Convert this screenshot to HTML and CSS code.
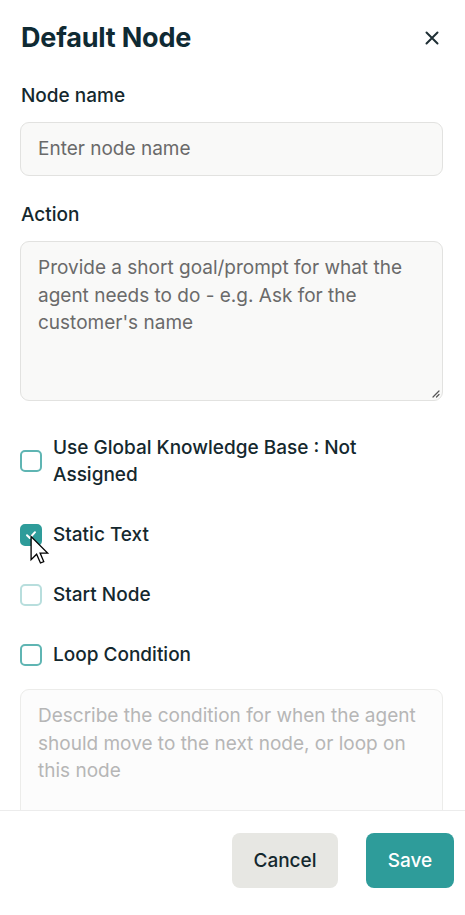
FILE: index.html
```html
<!DOCTYPE html>
<html lang="en">
<head>
<meta charset="utf-8">
<title>Default Node</title>
<link rel="stylesheet" href="styles.css">
</head>
<body>
<div class="panel">
  <div class="content">
    <div class="header">
      <h1 class="title">Default Node</h1>
      <button class="close" aria-label="Close">
        <svg width="14" height="14" viewBox="0 0 14 14"><path d="M1.5 1.5 L12.5 12.5 M12.5 1.5 L1.5 12.5" stroke="#1f2f35" stroke-width="2" stroke-linecap="round"/></svg>
      </button>
    </div>

    <div class="field">
      <label class="label">Node name</label>
      <div class="input"><span class="placeholder">Enter node name</span></div>
    </div>

    <div class="field field-action">
      <label class="label">Action</label>
      <div class="textarea">
        <span class="placeholder">Provide a short goal/prompt for what the agent needs to do - e.g. Ask for the customer's name</span>
        <svg class="grip" width="10" height="10" viewBox="0 0 10 10"><path d="M9 3 L3 9 M9 6.5 L6.5 9" stroke="#555" stroke-width="1.2" stroke-linecap="round"/></svg>
      </div>
    </div>

    <div class="checks">
      <div class="check-row">
        <span class="box"></span>
        <span class="check-label">Use Global Knowledge Base : Not Assigned</span>
      </div>
      <div class="check-row">
        <span class="box checked">
          <svg width="14" height="14" viewBox="0 0 14 14"><path d="M3 7.2 L5.8 10 L11 4.2" stroke="#fff" stroke-width="2" fill="none" stroke-linecap="round" stroke-linejoin="round"/></svg>
          <svg class="cursor" width="22" height="34" viewBox="0 0 20 30"><path d="M1 1 L1 22 L6 17 L9.5 25 L12.5 23.7 L9.2 16 L16 16 Z" fill="#fff" stroke="#000" stroke-width="1.2" stroke-linejoin="miter"/></svg>
        </span>
        <span class="check-label">Static Text</span>
      </div>
      <div class="check-row">
        <span class="box disabled"></span>
        <span class="check-label">Start Node</span>
      </div>
      <div class="check-row">
        <span class="box"></span>
        <span class="check-label">Loop Condition</span>
      </div>
    </div>

    <div class="textarea textarea-disabled">
      <span class="placeholder light">Describe the condition for when the agent should move to the next node, or loop on this node</span>
    </div>
  </div>

  <div class="footer">
    <button class="btn btn-cancel">Cancel</button>
    <button class="btn btn-save">Save</button>
  </div>
</div>
</body>
</html>
```

FILE: styles.css
```css
* { box-sizing: border-box; }

html, body {
  margin: 0;
  padding: 0;
  background: #ffffff;
}

body {
  font-family: Inter, "Noto Sans", Arial, sans-serif;
  color: #1c2c32;
}

.panel {
  width: 465px;
  height: 915px;
  display: flex;
  flex-direction: column;
  overflow: hidden;
}

.content {
  flex: 1;
  min-height: 0;
  overflow: hidden;
  padding: 20px 22px 0 20px;
  display: flex;
  flex-direction: column;
}

.header {
  display: flex;
  align-items: center;
  justify-content: space-between;
  height: 36px;
  padding-left: 1px;
}

.title {
  margin: 0;
  font-size: 27px;
  line-height: 36px;
  font-weight: 700;
  color: #0f2a33;
  letter-spacing: -0.2px;
}

.close {
  border: 0;
  background: transparent;
  padding: 0;
  width: 14px;
  height: 14px;
  margin-right: 4px;
  display: flex;
}

.field {
  display: flex;
  flex-direction: column;
  gap: 14px;
  margin-top: 28px;
}

.field-action {
  margin-top: 27px;
}

.label {
  font-size: 19px;
  line-height: 24px;
  font-weight: 500;
  color: #14282e;
  padding-left: 1px;
}

.input {
  height: 54px;
  border: 1px solid #e2e2e0;
  border-radius: 9px;
  background: #f9f9f8;
  display: flex;
  align-items: center;
  padding: 0 17px;
}

.placeholder {
  font-size: 19px;
  line-height: 27.5px;
  color: #6a6a6a;
}

.placeholder.light {
  color: #b6b6b6;
}

.textarea {
  position: relative;
  height: 160px;
  border: 1px solid #e2e2e0;
  border-radius: 9px;
  background: #f9f9f8;
  padding: 12px 17px;
}

.grip {
  position: absolute;
  right: 2px;
  bottom: 2px;
}

.checks {
  display: flex;
  flex-direction: column;
  gap: 33px;
  margin-top: 33px;
}

.check-row {
  display: flex;
  align-items: center;
  gap: 11px;
  padding-left: 1px;
}

.box {
  position: relative;
  flex: none;
  width: 22px;
  height: 22px;
  border: 2px solid #5fb5b3;
  border-radius: 5px;
  background: #fff;
  display: flex;
  align-items: center;
  justify-content: center;
  margin-left: -1px;
}

.box.checked {
  background: #2e9c9a;
  border-color: #2e9c9a;
}

.box.disabled {
  border-color: #b8dedd;
}

.cursor {
  position: absolute;
  left: 8px;
  top: 9px;
}

.check-label {
  font-size: 19px;
  line-height: 27px;
  font-weight: 500;
  color: #14282e;
  max-width: 330px;
}

.textarea-disabled {
  margin-top: 21px;
  flex: none;
  border-color: #ececea;
  background: #fcfcfc;
}

.footer {
  flex: none;
  height: 105px;
  border-top: 1px solid #ececec;
  background: #fff;
  display: flex;
  justify-content: flex-end;
  align-items: flex-start;
  gap: 28px;
  padding: 22px 11px 0 0;
}

.btn {
  height: 55px;
  border: 0;
  border-radius: 8px;
  font-family: Inter, "Noto Sans", Arial, sans-serif;
  font-size: 19px;
  font-weight: 500;
  padding: 0;
}

.btn-cancel {
  width: 106px;
  background: #e7e7e3;
  color: #14282e;
}

.btn-save {
  width: 88px;
  background: #2e9c9a;
  color: #ffffff;
}
```
